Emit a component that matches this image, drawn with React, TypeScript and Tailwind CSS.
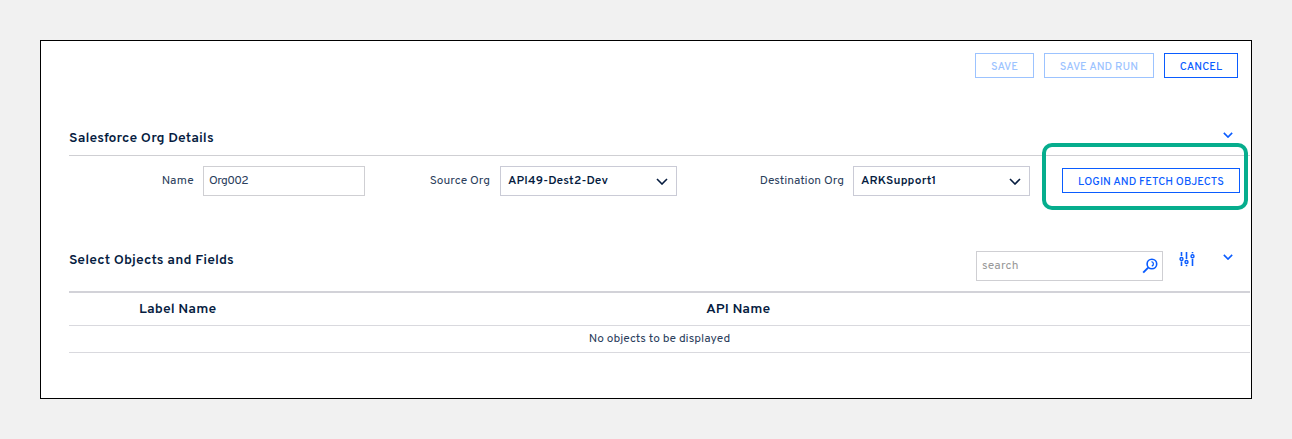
import React from "react";

function Chevron({ className }: { className: string }) {
  return (
    <svg viewBox="0 0 12 7" fill="none" stroke="currentColor" className={className}>
      <path d="M1 1 L6 6 L11 1" />
    </svg>
  );
}

function Sliders() {
  return (
    <svg width="16" height="16" viewBox="0 0 16 16" fill="none" stroke="currentColor" className="text-[#0a5cff]">
      <path d="M2.5 1v4M2.5 10.5v4.5M7.5 1v7M7.5 14v1.2M13.5 1v1.2M13.5 8v7" strokeWidth="1.6" />
      <circle cx="2.5" cy="8" r="1.5" strokeWidth="1.4" />
      <circle cx="7.5" cy="11" r="1.5" strokeWidth="1.4" />
      <circle cx="13.5" cy="5.2" r="1.5" strokeWidth="1.4" />
    </svg>
  );
}

function SearchIcon() {
  return (
    <svg width="16" height="16" viewBox="0 0 16 16" fill="none" stroke="currentColor" className="text-[#0a5cff]">
      <circle cx="9.9" cy="6" r="4.8" strokeWidth="1.6" />
      <path d="M6.2 9.6 L1.2 14.6" strokeWidth="1.9" />
      <path d="M9.5 3.6 C12 4 12 7.4 9.8 8" strokeWidth="1.3" />
    </svg>
  );
}

function ActionButton({ label, className }: { label: string; className: string }) {
  return (
    <button className={`flex h-[25px] shrink-0 items-center justify-center whitespace-nowrap border bg-white pt-[3px] text-[11px] font-medium ${className}`}>
      {label}
    </button>
  );
}

function Select({ value }: { value: string }) {
  return (
    <div className="flex h-[30px] w-[177px] shrink-0 items-center justify-between border border-[#cacbd6] pr-2 pl-[7px] text-[#061c3f]">
      <span className="whitespace-nowrap text-xs font-semibold tracking-[0.18px]">{value}</span>
      <Chevron className="h-[7px] w-3 stroke-[1.6]" />
    </div>
  );
}

export default function App() {
  return (
    <div className="h-[439px] w-[1292px] bg-[#f1f1f1] p-10 font-['Overpass',Roboto,sans-serif] text-[#061c3f]">
      <main className="h-[359px] border border-black bg-white pr-px pl-7">
        <div className="flex h-[84px] gap-2.5 justify-end pt-3 pr-3">
          <ActionButton label="SAVE" className="w-[59px] border-[#9cc3ff] text-[#9cc3ff] tracking-[0.1px]" />
          <ActionButton label="SAVE AND RUN" className="w-[110px] border-[#9cc3ff] text-[#9cc3ff] tracking-[0.1px]" />
          <ActionButton label="CANCEL" className="w-[74px] border-[#0a5cff] text-[#0a5cff] tracking-[0.1px]" />
        </div>

        <section>
          <header className="flex h-[31px] items-start justify-between border-b border-[#cfcfd3] pr-[17px]">
            <h2 className="pt-1 text-sm leading-5 font-semibold tracking-[0.11px]">Salesforce Org Details</h2>
            <Chevron className="mt-[7px] h-[6px] w-[10px] stroke-[1.9] text-[#0a5cff]" />
          </header>
          <div className="relative flex items-start pt-2.5 pr-2.5">
            <label className="w-[125px] pt-[6px] text-right text-xs leading-[18px] tracking-[0.2px] text-[#2b405c]">Name</label>
            <input
              defaultValue="Org002"
              className="ml-[9px] h-[30px] w-[162px] shrink-0 border border-[#cfcfd3] px-[5px] text-xs tracking-[-0.6px] text-[#2b405c]"
            />
            <label className="w-[125px] pt-[6px] text-right text-xs leading-[18px] text-[#2b405c]">Source Org</label>
            <div className="ml-2.5">
              <Select value="API49-Dest2-Dev" />
            </div>
            <label className="w-[167px] pt-[6px] text-right text-xs leading-[18px] tracking-[0.03px] text-[#2b405c]">Destination Org</label>
            <div className="ml-[9px]">
              <Select value="ARKSupport1" />
            </div>
            <div className="mt-0.5 ml-8">
              <ActionButton label="LOGIN AND FETCH OBJECTS" className="w-[178px] border-[#0a5cff] text-[#0a5cff] tracking-[0.07px]" />
            </div>
            <div className="pointer-events-none absolute -top-[13px] right-[2px] h-[67px] w-[206px] rounded-[10px] border-4 border-[#06ad8d]" />
          </div>
        </section>

        <section className="pt-[55px]">
          <header className="flex h-[42px] items-start border-b-2 border-[#d2d2d8]">
            <h2 className="flex-1 text-sm leading-5 font-semibold tracking-[0.1px]">Select Objects and Fields</h2>
            <div className="flex h-[30px] w-[187px] items-center justify-between border border-[#cfcfd3] pr-1 pl-[5px]">
              <span className="text-xs tracking-[0.2px] text-[#999999]">search</span>
              <SearchIcon />
            </div>
            <div className="ml-4">
              <Sliders />
            </div>
            <Chevron className="mt-[3px] mr-[17px] ml-7 h-[6px] w-[10px] stroke-[1.9] text-[#0a5cff]" />
          </header>
          <div className="flex h-[33px] items-center border-b border-[#d9d9de] pt-0.5 pl-[70px] text-sm font-semibold">
            <span className="w-[567px] tracking-[0.1px]">Label Name</span>
            <span className="tracking-[0.07px]">API Name</span>
          </div>
          <div className="flex h-[27px] items-center justify-center border-b border-[#d9d9de] text-xs text-[#2b405c]">
            No objects to be displayed
          </div>
        </section>
      </main>
    </div>
  );
}
